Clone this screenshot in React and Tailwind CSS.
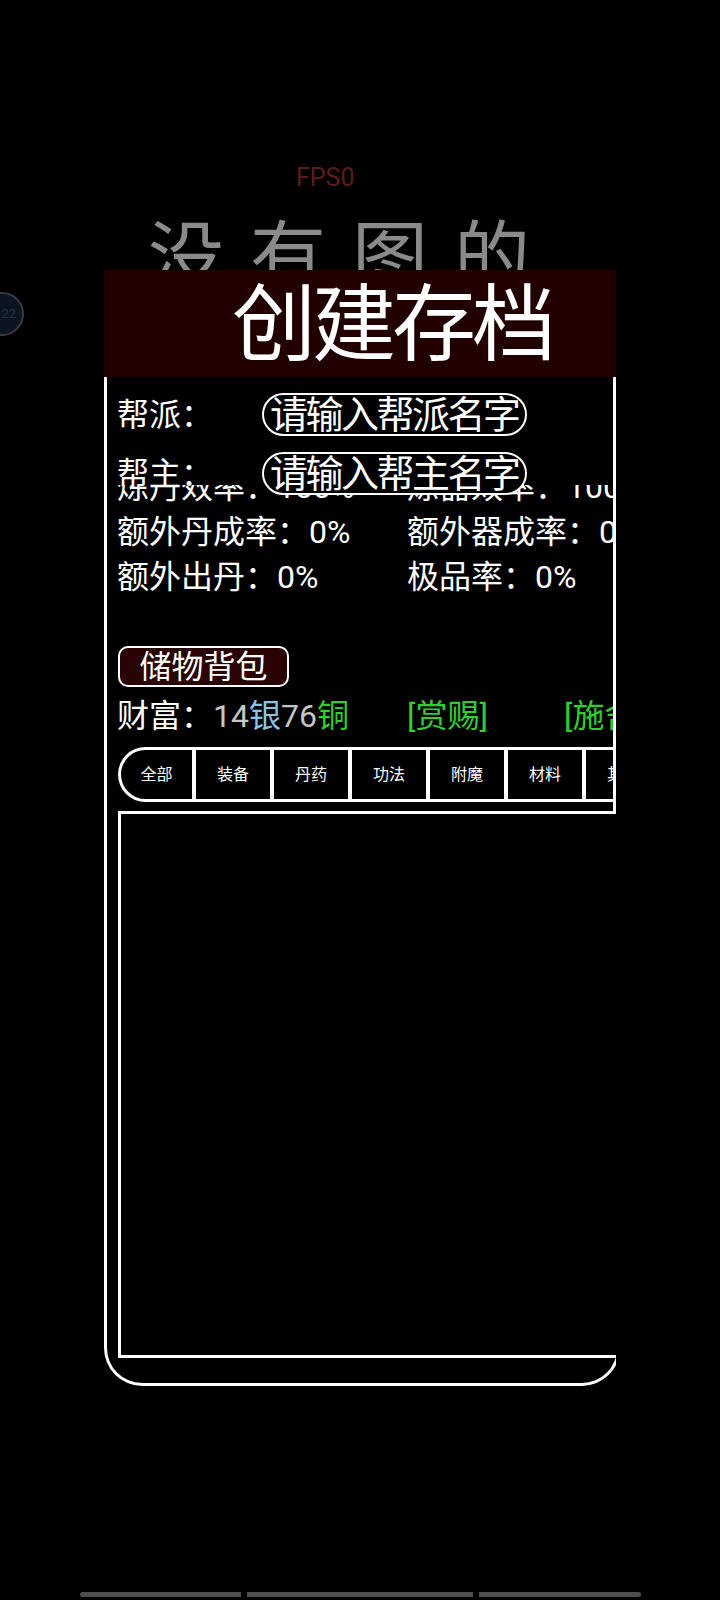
import React from 'react';

const STATS = [
  ['炼丹效率：100%', '炼器效率：100%'],
  ['额外丹成率：0%', '额外器成率：0%'],
  ['额外出丹：0%', '极品率：0%'],
];

const TABS = ['全部', '装备', '丹药', '功法', '附魔', '材料', '其他'];

function NameRow({ label, hint }) {
  return (
    <div className="flex items-center h-[43px]">
      <div className="w-[145px] text-[32px] leading-[40px] text-white">{label}</div>
      <div className="h-[43px] px-[6px] border-2 border-white rounded-full bg-black flex items-start overflow-hidden">
        <span className="text-[38px] leading-[40px] tracking-[-2.5px] text-white whitespace-nowrap">{hint}</span>
      </div>
    </div>
  );
}

export default function App() {
  return (
    <div className="relative w-[720px] h-[1600px] bg-black overflow-hidden flex flex-col font-[Roboto,'Noto_Sans_CJK_SC',sans-serif]">

      {/* floating ball at the left edge */}
      <div className="absolute left-[-20px] top-[292px] w-[44px] h-[44px] rounded-full border-2 border-[#383c42] bg-[#0b1420] flex items-center justify-end pr-[6px] text-[13px] text-[#26303c]">
        22
      </div>

      <div className="pt-[162px] pl-[296px] h-[194px] text-[25px] leading-[32px] text-[#5c1c1c]">FPS0</div>

      {/* background title, partly hidden by the dialog */}
      <div className="mt-[28px] h-[48px] pl-[148px] text-[76px] leading-[72px] tracking-[26px] text-[#8a8a8a] whitespace-nowrap">
        没有图的
      </div>

      {/* dialog header */}
      <div className="relative z-10 ml-[104px] w-[512px] h-[107px] bg-[#220000] pl-[128px] flex items-start">
        <span className="text-[84px] leading-[111px] tracking-[-4px] text-white whitespace-nowrap">创建存档</span>
      </div>

      {/* dialog body, cut at the right */}
      <div className="ml-[104px] w-[512px] overflow-hidden">
        <div className="w-[516px] border-x-[3px] border-b-[3px] border-white rounded-b-[38px] pb-[25px]">

          <div className="w-[509px] border-r-[3px] border-white overflow-hidden">
            <div className="relative z-10 h-[108px] pt-[16px] pl-[10px] flex flex-col gap-[16px]">
              <NameRow label="帮派：" hint="请输入帮派名字" />
              <NameRow label="帮主：" hint="请输入帮主名字" />
            </div>

            <div className="h-[137px] overflow-hidden">
              <div className="-mt-[20px] pl-[10px]">
                {STATS.map(([a, b]) => (
                  <div key={a} className="grid grid-cols-[290px_1fr] text-[32px] leading-[45px] text-white whitespace-nowrap">
                    <span>{a}</span>
                    <span>{b}</span>
                  </div>
                ))}
              </div>
            </div>

            <div className="mt-[24px] ml-[11px] w-[171px] h-[41px] border-2 border-white rounded-[10px] bg-[#2a0404] flex items-center justify-center">
              <span className="text-[32px] leading-[36px] text-white">储物背包</span>
            </div>

            <div className="mt-[9px] pl-[10px] text-[32px] leading-[40px] whitespace-nowrap">
              <span className="text-white">财富：</span>
              <span className="text-[#c6c6c6]">14</span>
              <span className="text-[#8cc4e4]">银</span>
              <span className="text-[#c6c6c6]">76</span>
              <span className="text-[#2ecf2e]">铜</span>
              <span className="ml-[58px] text-[#2ecf2e]">[赏赐]</span>
              <span className="ml-[76px] text-[#2ecf2e]">[施舍]</span>
            </div>

            <div className="mt-[11px] mb-[9px] ml-[11px] h-[55px] flex border-y-[3px] border-l-[3px] border-white rounded-l-[28px] w-[560px]">
              {TABS.map((t, i) => (
                <div
                  key={t}
                  className={`${i === 0 ? 'w-[75px]' : 'w-[78px]'} shrink-0 border-r-[4px] border-white flex items-center justify-center text-[16px] text-white`}
                >
                  {t}
                </div>
              ))}
            </div>
          </div>

          {/* item list box */}
          <div className="ml-[11px] w-[540px] h-[547px] border-[3px] border-white"></div>
        </div>
      </div>

      {/* gesture bar */}
      <div className="mt-auto mb-[3px] ml-[80px] flex gap-[6px] h-[5px]">
        <div className="w-[161px] bg-[#4e4e4e] rounded-l-full"></div>
        <div className="w-[226px] bg-[#4e4e4e]"></div>
        <div className="w-[162px] bg-[#4e4e4e] rounded-r-full"></div>
      </div>
    </div>
  );
}
